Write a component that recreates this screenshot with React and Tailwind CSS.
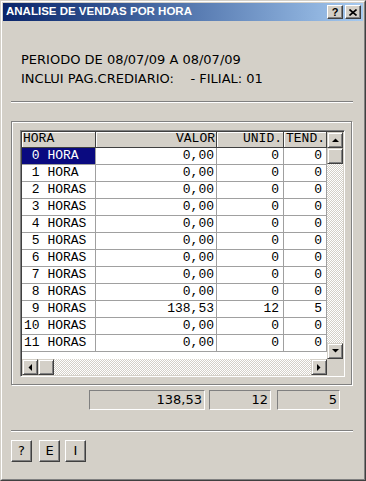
import React from 'react';

const raised =
  'bg-[#d4d0c8] border border-t-white border-l-white border-r-[#404040] border-b-[#404040] shadow-[inset_-1px_-1px_0_#808080]';
const raisedScroll =
  'bg-[#d4d0c8] border border-t-[#d4d0c8] border-l-[#d4d0c8] border-r-[#404040] border-b-[#404040] shadow-[inset_1px_1px_0_#ffffff,inset_-1px_-1px_0_#808080]';
const dither =
  'bg-[repeating-conic-gradient(#ffffff_0%_25%,#d4d0c8_0%_50%)] bg-[length:2px_2px]';
const sans = { fontFamily: '"DejaVu Sans", "Liberation Sans", sans-serif' };
const mono = { fontFamily: '"Liberation Mono", "DejaVu Sans Mono", monospace' };

const rows = Array.from({ length: 12 }, (_, i) => ({
  n: String(i).padStart(2, ' '),
  label: i < 2 ? 'HORA' : 'HORAS',
  valor: i === 9 ? '138,53' : '0,00',
  unid: i === 9 ? '12' : '0',
  tend: i === 9 ? '5' : '0',
}));

function Arrow({ dir }) {
  const pts = {
    up: '0,4 7,4 3.5,0.5',
    down: '0,0 7,0 3.5,3.5',
    left: '4,0 4,7 0.5,3.5',
    right: '0,0 0,7 3.5,3.5',
  }[dir];
  const vertical = dir === 'up' || dir === 'down';
  return (
    <svg width={vertical ? 7 : 4} height={vertical ? 4 : 7} viewBox={vertical ? '0 0 7 4' : '0 0 4 7'}>
      <polygon points={pts} fill="#000" />
    </svg>
  );
}

function ScrollBtn({ dir }) {
  return (
    <div className={`w-[16px] h-[16px] shrink-0 flex items-center justify-center ${raisedScroll}`}>
      <Arrow dir={dir} />
    </div>
  );
}

export default function App() {
  return (
    <div className="w-[366px] h-[481px] bg-[#d4d0c8] border border-t-[#d4d0c8] border-l-[#d4d0c8] border-r-[#404040] border-b-[#404040]">
      <div className="w-full h-full border border-t-white border-l-white border-r-[#808080] border-b-[#808080] p-px flex flex-col">
        {/* title bar */}
        <div className="h-[18px] shrink-0 flex items-center justify-between pl-[3px] pr-[2px] bg-gradient-to-r from-[#0a246a] to-[#a6caf0]">
          <span
            className="text-white font-bold text-[11.5px] leading-none"
            style={{ fontFamily: '"Liberation Sans", Arial, sans-serif' }}
          >
            ANALISE DE VENDAS POR HORA
          </span>
          <div className="flex gap-[2px]">
            <div className={`w-[16px] h-[14px] flex items-center justify-center ${raised}`}>
              <span className="text-[11px] font-bold leading-none text-black" style={{ fontFamily: '"Liberation Sans", sans-serif' }}>?</span>
            </div>
            <div className={`w-[16px] h-[14px] flex items-center justify-center ${raised}`}>
              <svg width="8" height="7" viewBox="0 0 8 7">
                <path d="M0.5 0.5 L7.5 6.5 M7.5 0.5 L0.5 6.5" stroke="#000" strokeWidth="1.6" />
              </svg>
            </div>
          </div>
        </div>

        {/* body */}
        <div className="flex flex-col pl-[8px] pr-[10px] pt-[29px]" style={sans}>
          <div className="ml-[10px] text-[13px] leading-[19px] text-black">
            <div>PERIODO DE 08/07/09 A 08/07/09</div>
            <div className="whitespace-pre">INCLUI PAG.CREDIARIO:    - FILIAL: 01</div>
          </div>

          <div className="mt-[13px] h-[2px] border-t border-t-[#808080] border-b border-b-white" />

          {/* group */}
          <div className="mt-[18px] w-[341px] h-[264px] border border-[#808080] shadow-[inset_1px_1px_0_#ffffff,1px_1px_0_#ffffff] pt-[8px] pl-[8px]">
            <div className="w-[325px] h-[247px] bg-white border border-t-[#808080] border-l-[#808080] border-r-white border-b-white shadow-[inset_1px_1px_0_#404040,inset_-1px_-1px_0_#d4d0c8] p-px flex flex-col">
              <div className="flex h-[227px]">
                <div className="w-[305px] flex flex-col text-[13px] text-black" style={mono}>
                  <div className="flex h-[16px] leading-[14px]">
                    <div className="w-[74px] pl-[1px] bg-[#d4d0c8] border-r border-b border-[#404040] shadow-[inset_1px_1px_0_#ffffff]">HORA</div>
                    <div className="w-[121px] text-right pr-[1px] bg-[#d4d0c8] border-r border-b border-[#404040] shadow-[inset_1px_1px_0_#ffffff]">VALOR</div>
                    <div className="w-[67px] text-right pr-[1px] bg-[#d4d0c8] border-r border-b border-[#404040] shadow-[inset_1px_1px_0_#ffffff]">UNID.</div>
                    <div className="w-[43px] text-right pr-[1px] bg-[#d4d0c8] border-r border-b border-[#404040] shadow-[inset_1px_1px_0_#ffffff]">TEND.</div>
                  </div>
                  {rows.map((r, i) => (
                    <div key={i} className="flex h-[17px] leading-[16px]">
                      <div
                        className={`w-[74px] pl-[2px] whitespace-pre border-r border-b border-[#a0a0a0] ${
                          i === 0 ? 'bg-[#0a0a80] text-white' : ''
                        }`}
                      >
                        {`${r.n} ${r.label}`}
                      </div>
                      <div className="w-[121px] text-right pr-[2px] border-r border-b border-[#a0a0a0]">{r.valor}</div>
                      <div className="w-[67px] text-right pr-[4px] border-r border-b border-[#a0a0a0]">{r.unid}</div>
                      <div className="w-[43px] text-right pr-[4px] border-r border-b border-[#a0a0a0]">{r.tend}</div>
                    </div>
                  ))}
                </div>
                {/* vertical scrollbar */}
                <div className="w-[16px] flex flex-col">
                  <ScrollBtn dir="up" />
                  <div className={`w-[16px] h-[16px] ${raisedScroll}`} />
                  <div className={`flex-1 ${dither}`} />
                  <ScrollBtn dir="down" />
                </div>
              </div>
              {/* horizontal scrollbar */}
              <div className="flex h-[16px]">
                <ScrollBtn dir="left" />
                <div className={`w-[16px] h-[16px] ${raisedScroll}`} />
                <div className={`flex-1 ${dither}`} />
                <ScrollBtn dir="right" />
                <div className="w-[16px] h-[16px] bg-[#d4d0c8]" />
              </div>
            </div>
          </div>

          {/* totals */}
          <div className="mt-[5px] ml-[78px] flex text-[13px] leading-[18px] text-black">
            <div className="w-[116px] h-[20px] text-right pr-[2px] border border-t-[#808080] border-l-[#808080] border-r-white border-b-white">138,53</div>
            <div className="ml-[4px] w-[62px] h-[20px] text-right pr-[2px] border border-t-[#808080] border-l-[#808080] border-r-white border-b-white">12</div>
            <div className="ml-[6px] w-[63px] h-[20px] text-right pr-[2px] border border-t-[#808080] border-l-[#808080] border-r-white border-b-white">5</div>
          </div>

          <div className="mt-[20px] h-[2px] border-t border-t-[#808080] border-b border-b-white" />

          <div className="mt-[8px] flex text-[13px] text-black">
            <button className={`w-[21px] h-[22px] flex items-center justify-center ${raised}`}>?</button>
            <button className={`ml-[7px] w-[21px] h-[22px] flex items-center justify-center ${raised}`}>E</button>
            <button className={`ml-[5px] w-[21px] h-[22px] flex items-center justify-center ${raised}`}>I</button>
          </div>
        </div>
      </div>
    </div>
  );
}
